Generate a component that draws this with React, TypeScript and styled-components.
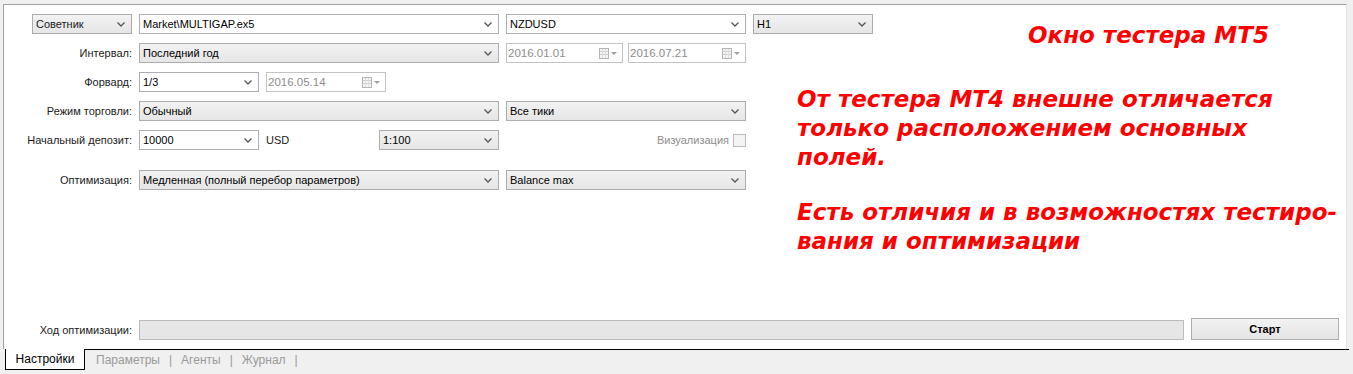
import React from 'react';
import styled, { createGlobalStyle } from 'styled-components';

const GlobalStyle = createGlobalStyle`
    html, body {
        margin: 0;
        padding: 0;
        background: #f0f0f0;
    }
    body {
        font-family: "Liberation Sans", Arial, sans-serif;
        font-size: 11px;
        color: #000;
    }
`;

const colors = {
    frame: '#a0a0a0',
    border: '#acacac',
    flatBorder: '#abadb3',
    disabledText: '#8d8d8d',
    tabText: '#9a9a9a',
    note: '#ff0000'
};

const StyledWindow = styled.div`
    width: 1353px;
    height: 374px;
    padding: 4px 4px 0 3px;
    box-sizing: border-box;
    display: flex;
    flex-direction: column;
`;

const StyledPanel = styled.div`
    position: relative;
    height: 345px;
    margin-right: 2px;
    box-sizing: border-box;
    background: #fff;
    border-top: 1px solid ${colors.frame};
    border-left: 1px solid ${colors.frame};
    border-right: 1px solid #e3e3e3;
    padding: 9px 0 9px 0;
    display: flex;
    flex-direction: column;
`;

const StyledRows = styled.div`
    display: flex;
    flex-direction: column;
    gap: 9px;
`;

const StyledRow = styled.div<{ $top?: number }>`
    display: flex;
    align-items: center;
    gap: 7px;
    height: 20px;
    margin-top: ${p => p.$top || 0}px;
`;

const StyledLabel = styled.div`
    width: 128px;
    flex: none;
    display: flex;
    justify-content: flex-end;
    white-space: nowrap;
    color: #1a1a1a;
`;

const StyledCombo = styled.div<{ $w: number; $flat?: boolean }>`
    width: ${p => p.$w}px;
    height: 20px;
    flex: none;
    box-sizing: border-box;
    border: 1px solid ${p => (p.$flat ? colors.flatBorder : colors.border)};
    background: ${p => (p.$flat ? '#fff' : 'linear-gradient(#f2f2f2, #e6e6e6)')};
    display: flex;
    align-items: center;
    justify-content: space-between;
    padding: 0 6px 0 3px;
    white-space: nowrap;
`;

const StyledDate = styled.div<{ $w: number }>`
    width: ${p => p.$w}px;
    height: 20px;
    flex: none;
    box-sizing: border-box;
    border: 1px solid #c3c3c3;
    background: #fff;
    color: ${colors.disabledText};
    display: flex;
    align-items: center;
    justify-content: space-between;
    padding: 0 4px 0 1px;
    font-size: 11.5px;
`;

const StyledPair = styled.div<{ $gap: number }>`
    display: flex;
    gap: ${p => p.$gap}px;
`;

const StyledText = styled.span<{ $w?: number }>`
    width: ${p => (p.$w ? `${p.$w}px` : 'auto')};
    flex: none;
    color: #1a1a1a;
`;

const StyledCheckCell = styled.label`
    width: 240px;
    display: flex;
    align-items: center;
    justify-content: flex-end;
    gap: 4px;
    color: ${colors.disabledText};
`;

const StyledCheckbox = styled.span`
    width: 13px;
    height: 13px;
    box-sizing: border-box;
    border: 1px solid #bcbcbc;
    background: #f4f4f4;
`;

const StyledFill = styled.div`
    flex: 1;
`;

const StyledProgressRow = styled.div`
    display: flex;
    align-items: center;
    gap: 7px;
    padding-right: 7px;
`;

const StyledProgress = styled.div`
    flex: 1;
    height: 20px;
    box-sizing: border-box;
    border: 1px solid #bcbcbc;
    background: #e6e6e6;
`;

const StyledButton = styled.button`
    width: 148px;
    height: 22px;
    margin-top: -1px;
    box-sizing: border-box;
    border: 1px solid #adadad;
    background: linear-gradient(#f2f2f2, #e4e4e4);
    font-family: "Liberation Sans", Arial, sans-serif;
    font-size: 11px;
    font-weight: bold;
    color: #000;
    padding: 0;
`;

const StyledTabBar = styled.div`
    display: flex;
    height: 22px;
    padding-left: 2px;
`;

const StyledActiveTab = styled.div`
    width: 80px;
    height: 21px;
    box-sizing: border-box;
    border: 1px solid #000;
    border-top: none;
    background: #fff;
    display: flex;
    align-items: center;
    justify-content: center;
    font-size: 12px;
`;

const StyledTabStrip = styled.div`
    flex: 1;
    height: 21px;
    box-sizing: border-box;
    border-top: 1px solid #000;
    display: flex;
    align-items: center;
    padding-left: 11px;
    gap: 9px;
    font-size: 12px;
    color: ${colors.tabText};
`;

const StyledNotes = styled.div`
    position: absolute;
    left: 793px;
    top: 16px;
    font-family: "DejaVu Sans", "Liberation Sans", sans-serif;
    font-style: italic;
    font-weight: bold;
    font-size: 23px;
    line-height: 29px;
    color: ${colors.note};
    pointer-events: none;
`;

const StyledNoteTitle = styled.div`
    padding-left: 231px;
    margin-bottom: 35px;
`;

const StyledNoteBlock = styled.div`
    margin-bottom: 26px;
`;

const Chevron: React.FC = () => (
    <svg width="8" height="5" viewBox="0 0 8 5">
        <polyline points="0.5,0.5 4,4 7.5,0.5" fill="none" stroke="#555" strokeWidth="1.3" />
    </svg>
);

const CalendarDrop: React.FC = () => (
    <svg width="19" height="11" viewBox="0 0 19 11">
        <rect x="0.5" y="0.5" width="9" height="10" fill="#f4f4f4" stroke="#b5b5b5" />
        <line x1="1" y1="3.5" x2="9" y2="3.5" stroke="#cfcfcf" />
        <line x1="1" y1="6.5" x2="9" y2="6.5" stroke="#cfcfcf" />
        <line x1="3.5" y1="1" x2="3.5" y2="10" stroke="#dcdcdc" />
        <line x1="6.5" y1="1" x2="6.5" y2="10" stroke="#dcdcdc" />
        <polygon points="12,4 18,4 15,7" fill="#a0a0a0" />
    </svg>
);

type ComboProps = { w: number; flat?: boolean; children?: React.ReactNode };

const Combo: React.FC<ComboProps> = ({ w, flat, children }) => (
    <StyledCombo $w={w} $flat={flat}>
        <span>{children}</span>
        <Chevron />
    </StyledCombo>
);

const DateBox: React.FC<{ w: number; value: string }> = ({ w, value }) => (
    <StyledDate $w={w}>
        <span>{value}</span>
        <CalendarDrop />
    </StyledDate>
);

const tabs = ['Параметры', 'Агенты', 'Журнал'];

const App: React.FC = () => {
    return (<React.Fragment>
        <GlobalStyle />
        <StyledWindow>
            <StyledPanel>
                <StyledRows>
                    <StyledRow>
                        <StyledLabel><Combo w={100}>Советник</Combo></StyledLabel>
                        <Combo w={360} flat>Market\MULTIGAP.ex5</Combo>
                        <Combo w={240} flat>NZDUSD</Combo>
                        <Combo w={120}>H1</Combo>
                    </StyledRow>
                    <StyledRow>
                        <StyledLabel>Интервал:</StyledLabel>
                        <Combo w={360}>Последний год</Combo>
                        <StyledPair $gap={5}>
                            <DateBox w={117} value="2016.01.01" />
                            <DateBox w={118} value="2016.07.21" />
                        </StyledPair>
                    </StyledRow>
                    <StyledRow>
                        <StyledLabel>Форвард:</StyledLabel>
                        <Combo w={120} flat>1/3</Combo>
                        <DateBox w={120} value="2016.05.14" />
                    </StyledRow>
                    <StyledRow>
                        <StyledLabel>Режим торговли:</StyledLabel>
                        <Combo w={360}>Обычный</Combo>
                        <Combo w={240}>Все тики</Combo>
                    </StyledRow>
                    <StyledRow>
                        <StyledLabel>Начальный депозит:</StyledLabel>
                        <Combo w={120} flat>10000</Combo>
                        <StyledText $w={106}>USD</StyledText>
                        <Combo w={120}>1:100</Combo>
                        <StyledCheckCell>Визуализация <StyledCheckbox /></StyledCheckCell>
                    </StyledRow>
                </StyledRows>
                <StyledRow $top={20}>
                    <StyledLabel>Оптимизация:</StyledLabel>
                    <Combo w={360}>Медленная (полный перебор параметров)</Combo>
                    <Combo w={240}>Balance max</Combo>
                </StyledRow>
                <StyledFill />
                <StyledProgressRow>
                    <StyledLabel>Ход оптимизации:</StyledLabel>
                    <StyledProgress />
                    <StyledButton>Старт</StyledButton>
                </StyledProgressRow>
                <StyledNotes>
                    <StyledNoteTitle>Окно тестера MT5</StyledNoteTitle>
                    <StyledNoteBlock>
                        От тестера МТ4 внешне отличается<br />
                        только расположением основных<br />
                        полей.
                    </StyledNoteBlock>
                    <StyledNoteBlock>
                        Есть отличия и в возможностях тестиро-<br />
                        вания и оптимизации
                    </StyledNoteBlock>
                </StyledNotes>
            </StyledPanel>
            <StyledTabBar>
                <StyledActiveTab>Настройки</StyledActiveTab>
                <StyledTabStrip>
                    {tabs.map(tab => (<React.Fragment key={tab}>
                        <span>{tab}</span><span>|</span>
                    </React.Fragment>))}
                </StyledTabStrip>
            </StyledTabBar>
        </StyledWindow>
    </React.Fragment>);
}

export default App;
